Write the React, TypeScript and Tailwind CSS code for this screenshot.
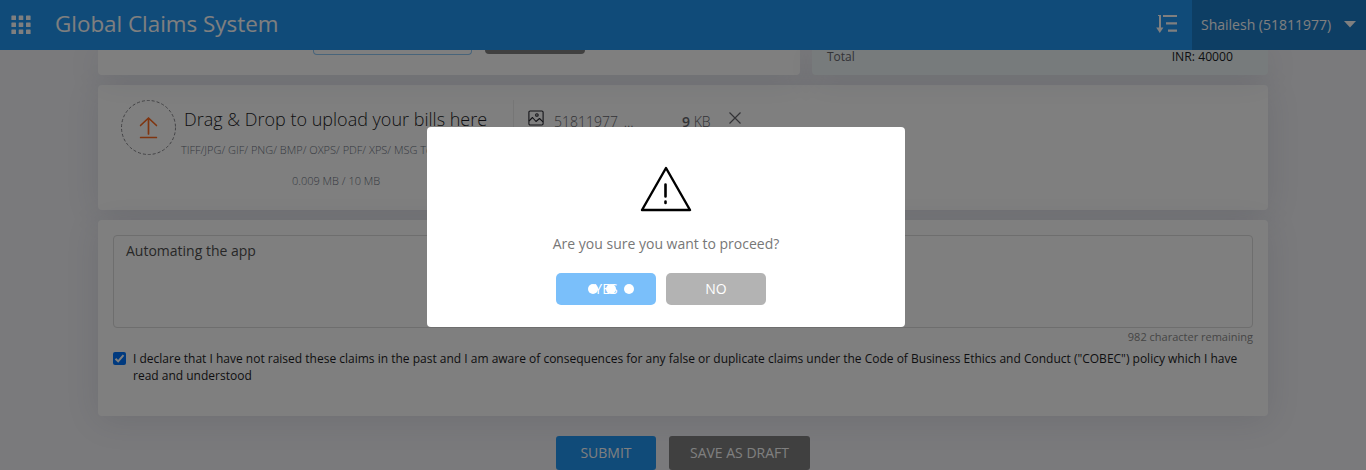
import React from "react";

const GridIcon = () => (
  <svg width="20" height="20" viewBox="0 0 20 20" fill="#fff" className="block">
    {[0, 7, 14].map((y) =>
      [0, 7.3, 14.6].map((x) => <rect key={`${x}-${y}`} x={x + 0.4} y={y + 0.4} width="4.6" height="4.6" rx="0.6" />)
    )}
  </svg>
);

const SortIcon = () => (
  <svg width="22" height="20" viewBox="0 0 22 20" fill="none" stroke="#fff" className="block">
    <path d="M4 1V14" strokeWidth="2" />
    <path d="M4 1.5H2" strokeWidth="1" />
    <path d="M0.2 13.4H7.4L3.8 19Z" fill="#fff" stroke="none" />
    <path d="M7 2H21M10 9.3H21M12 16.6H21" strokeWidth="2.2" />
  </svg>
);

const UploadIcon = () => (
  <svg width="18" height="22" viewBox="0 0 18 22" fill="none" stroke="#ff6a20" strokeWidth="1.7" strokeLinecap="round" strokeLinejoin="round">
    <path d="M9 17V1M1 8.5L9 1L17 8.5M1 20.5H17" />
  </svg>
);

const ImageIcon = () => (
  <svg width="16" height="16" viewBox="0 0 16 16" fill="none" stroke="#26262e" strokeWidth="1.1" strokeLinejoin="round">
    <rect x="0.9" y="1" width="14.2" height="14" rx="1.2" />
    <circle cx="8.9" cy="5" r="1.3" />
    <path d="M1 11L4.5 7.5L8 11.5L11.5 8.5L15 11.8" />
  </svg>
);

const CloseIcon = () => (
  <svg width="12" height="12" viewBox="0 0 12 12" fill="none" stroke="#66666d" strokeWidth="1.2">
    <path d="M0.5 0.5L11.5 11.5M11.5 0.5L0.5 11.5" />
  </svg>
);

const WarningIcon = () => (
  <svg width="52" height="46" viewBox="0 0 52 46" fill="none" stroke="#000" strokeWidth="2.4" strokeLinecap="round" strokeLinejoin="round">
    <path d="M26 2L50 44H2Z" />
    <path d="M25.5 18.5V30.5M25.5 35.5V37" strokeWidth="2.6" />
  </svg>
);

function Header() {
  return (
    <header className="relative z-10 flex h-[50px] items-center bg-[#2196f3] text-white">
      <div className="ml-[11px] -mt-px"><GridIcon /></div>
      <h1 className="ml-6 -mt-[3px] text-[22.4px] leading-[30px] whitespace-nowrap">Global Claims System</h1>
      <div className="ml-auto mr-[14px] -mt-[3px]"><SortIcon /></div>
      <div className="flex h-full w-[174px] items-center bg-[#1b7cc9] pl-[9px]">
        <span className="-mt-[2px] text-[14px] whitespace-nowrap">Shailesh (51811977)</span>
        <svg width="12" height="7" viewBox="0 0 12 7" className="ml-[13px] -mt-0.5"><path d="M0 0H12L6 6.5Z" fill="#fff" /></svg>
      </div>
    </header>
  );
}

function UploadCard() {
  return (
    <section className="flex h-[125px] rounded bg-white pt-[15px] pl-[23px] shadow-[0_4px_35px_rgba(40,50,80,0.11)]">
      <svg width="55" height="55" viewBox="0 0 55 55" className="shrink-0">
        <circle cx="27.5" cy="27.5" r="27" fill="none" stroke="#85858a" strokeWidth="1" strokeDasharray="3 2" />
        <g transform="translate(18.5 17)"><UploadIcon /></g>
      </svg>
      <div className="flex w-[338px] shrink-0 flex-col border-r border-[#ececec] font-light">
        <div className="mt-1 ml-2 text-[18px] leading-[30px] whitespace-nowrap text-[#1c1c25]">Drag &amp; Drop to upload your bills here</div>
        <div className="mt-2 ml-[5px] text-[11px] leading-[15px] whitespace-nowrap text-[#6d7482]">TIFF/JPG/ GIF/ PNG/ BMP/ OXPS/ PDF/ XPS/ MSG To upload</div>
        <div className="mt-4 ml-[116px] text-[11px] leading-[15px] whitespace-nowrap text-[#6d7482]">0.009 MB / 10 MB</div>
      </div>
      <div className="flex h-[43px] items-center pl-[14px] text-[14px] text-[#66666d]">
        <div className="-mt-2"><ImageIcon /></div>
        <span className="-mt-px ml-[10px] w-[128px] font-light">51811977_...</span>
        <span className="-mt-px w-[47px] font-light"><b className="font-semibold">9</b> KB</span>
        <div className="-mt-2"><CloseIcon /></div>
      </div>
    </section>
  );
}

function CommentsCard() {
  return (
    <section className="mt-[10px] h-[196px] rounded bg-white px-[15px] pt-[15px] shadow-[0_4px_35px_rgba(40,50,80,0.11)]">
      <div className="h-[93px] rounded border border-[#dcdcdc] px-3 pt-[5px] text-[14px] leading-5 text-[#4f4f4f]">Automating the app</div>
      <div className="mt-px text-right text-[11px] leading-[15px] text-[#8c8c8c]">982 character remaining</div>
      <div className="mt-[6px] flex">
        <svg width="13" height="13" viewBox="0 0 13 13" className="mt-[2px] shrink-0">
          <rect width="13" height="13" rx="2" fill="#0075ff" />
          <path d="M2.5 6.7L5.2 9.4L10.5 3.2" fill="none" stroke="#fff" strokeWidth="2" />
        </svg>
        <p className="ml-[7px] text-[12px] leading-[17px] text-[#1d1d25]">
          I declare that I have not raised these claims in the past and I am aware of consequences for any false or duplicate claims under the Code of Business Ethics and Conduct ("COBEC") policy which I have<br />
          read and understood
        </p>
      </div>
    </section>
  );
}

function ConfirmDialog() {
  return (
    <div className="fixed inset-0 z-20 flex justify-center bg-black/50 pt-[127px]">
      <div role="dialog" className="-ml-[34px] flex h-[200px] w-[478px] flex-col items-center rounded bg-white pt-[39px]">
        <WarningIcon />
        <p className="mt-[22px] text-[14px] leading-5 text-[#777]">Are you sure you want to proceed?</p>
        <div className="mt-[19px] mr-[10px] flex gap-[10px] text-[14px] text-white">
          <button className="relative h-8 w-[100px] rounded-[5px] bg-[#7abffa] pb-[2px]">
            YES
            <svg width="48" height="12" viewBox="0 0 48 12" fill="#fff" className="absolute top-[10px] left-[31px]">
              <circle cx="6" cy="6" r="5" /><circle cx="24" cy="6" r="5" /><circle cx="42" cy="6" r="5" />
            </svg>
          </button>
          <button className="h-8 w-[100px] rounded-[5px] bg-[#b3b3b3] pb-[2px]">NO</button>
        </div>
      </div>
    </div>
  );
}

export default function App() {
  return (
    <div className="h-[470px] overflow-hidden bg-[#f4f4f8] font-['Open_Sans',sans-serif]">
      <Header />
      <main className="ml-[98px] w-[1170px]">
        <div className="mb-[10px] flex h-[25px] gap-3">
          <div className="flex w-[702px] gap-[13px] rounded-b bg-white pl-[215px] shadow-[0_4px_35px_rgba(40,50,80,0.11)]">
            <div className="h-[5px] w-[159px] rounded-b border border-t-0 border-[#90c8f5]" />
            <div className="h-1 w-[100px] rounded-b bg-[#808080]" />
          </div>
          <div className="flex w-[456px] justify-between rounded-b bg-[#eef7f8] pr-[35px] pl-[15px] text-[12px] leading-[14px] shadow-[0_4px_35px_rgba(40,50,80,0.11)]">
            <span className="text-[#66666d]">Total</span>
            <span className="text-[12.2px] text-[#1c1c25]">INR: 40000</span>
          </div>
        </div>
        <UploadCard />
        <CommentsCard />
        <div className="mt-5 ml-[458px] flex gap-[13px] text-[14px] text-white">
          <button className="h-[34px] w-[100px] rounded-[3px] bg-[#2196f3] pb-[2px]">SUBMIT</button>
          <button className="h-[34px] w-[141px] rounded-[3px] bg-[#808080] pb-[2px]">SAVE AS DRAFT</button>
        </div>
      </main>
      <ConfirmDialog />
    </div>
  );
}
